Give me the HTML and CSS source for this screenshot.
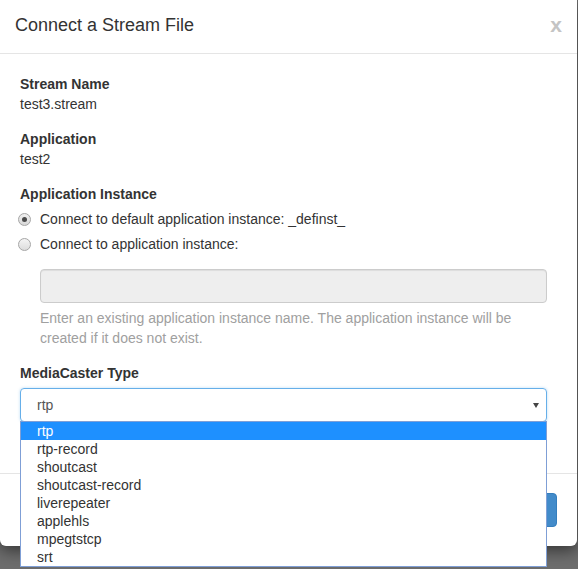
FILE: index.html
```html
<!DOCTYPE html>
<html lang="en">
<head>
<meta charset="utf-8">
<title>Connect a Stream File</title>
<link rel="stylesheet" href="styles.css">
</head>
<body>
<div class="modal">
  <div class="modal-header">
    <h4 class="modal-title">Connect a Stream File</h4>
    <span class="close">x</span>
  </div>
  <div class="modal-body">
    <div class="field">
      <div class="label">Stream Name</div>
      <div class="value">test3.stream</div>
    </div>
    <div class="field">
      <div class="label">Application</div>
      <div class="value">test2</div>
    </div>
    <div class="field instance">
      <div class="label">Application Instance</div>
      <div class="radio-row">
        <span class="radio checked"></span>
        <span>Connect to default application instance: _definst_</span>
      </div>
      <div class="radio-row">
        <span class="radio"></span>
        <span>Connect to application instance:</span>
      </div>
      <div class="indent">
        <div class="input disabled"></div>
        <div class="help">Enter an existing application instance name. The application instance will be created if it does not exist.</div>
      </div>
    </div>
    <div class="field last">
      <div class="label label-form">MediaCaster Type</div>
      <div class="select-wrap">
        <div class="select">
          <span>rtp</span>
          <span class="caret"></span>
        </div>
        <ul class="options">
          <li class="selected">rtp</li>
          <li>rtp-record</li>
          <li>shoutcast</li>
          <li>shoutcast-record</li>
          <li>liverepeater</li>
          <li>applehls</li>
          <li>mpegtstcp</li>
          <li>srt</li>
        </ul>
      </div>
    </div>
  </div>
  <div class="modal-footer">
    <button class="btn-primary">Add</button>
  </div>
</div>
</body>
</html>
```

FILE: styles.css
```css
html, body {
  margin: 0;
  padding: 0;
}

body {
  background: #6d6d6d;
  font-family: "Liberation Sans", Arial, sans-serif;
  font-size: 14px;
  color: #333;
  height: 569px;
  overflow: hidden;
}

.modal {
  width: 577px;
  background: #fff;
  border-radius: 0 0 6px 6px;
  box-shadow: 0 5px 15px rgba(0, 0, 0, 0.5);
}

.modal-header {
  display: flex;
  justify-content: space-between;
  align-items: flex-start;
  padding: 12px 15px 15px 15px;
  border-bottom: 1px solid #e5e5e5;
}

.modal-title {
  margin: 0;
  font-size: 18px;
  font-weight: normal;
  line-height: 26px;
  color: #333;
}

.close {
  font-size: 21px;
  font-weight: bold;
  line-height: 26px;
  color: #c4c4c4;
}

.modal-body {
  padding: 21px 30px 51px 20px;
}

.field {
  margin-bottom: 16px;
}

.field.instance {
  margin-bottom: 15px;
}

.field.last {
  margin-bottom: 0;
}

.label {
  font-weight: bold;
  line-height: 19px;
}

.label-form {
  line-height: 20px;
  margin-bottom: 5px;
}

.value {
  line-height: 20px;
}

.radio-row {
  display: flex;
  align-items: center;
  line-height: 20px;
  margin-top: 5px;
}

.radio {
  box-sizing: border-box;
  width: 13px;
  height: 13px;
  margin-left: -2px;
  margin-right: 9px;
  border-radius: 50%;
  border: 1px solid #a6a6a6;
  background: linear-gradient(#f4f4f4, #dcdcdc);
  display: flex;
  align-items: center;
  justify-content: center;
}

.radio.checked {
  background: linear-gradient(#f0f0f0, #d8d8d8);
}

.radio.checked::after {
  content: "";
  width: 5px;
  height: 5px;
  border-radius: 50%;
  background: #4a4a4a;
}

.indent {
  padding-left: 20px;
  margin-top: 15px;
}

.input {
  box-sizing: border-box;
  height: 34px;
  border: 1px solid #ccc;
  border-radius: 4px;
  box-shadow: inset 0 1px 1px rgba(0, 0, 0, 0.075);
}

.input.disabled {
  background: #eee;
}

.help {
  margin-top: 5px;
  line-height: 20px;
  color: #a0a0a0;
}

.select-wrap {
  position: relative;
}

.select {
  box-sizing: border-box;
  height: 34px;
  display: flex;
  align-items: center;
  justify-content: space-between;
  padding: 0 7px 0 16px;
  border: 1px solid #66afe9;
  border-radius: 4px;
  box-shadow: 0 0 3px rgba(102, 175, 233, 0.45);
  color: #555;
}

.caret {
  width: 0;
  height: 0;
  border-left: 3px solid transparent;
  border-right: 3px solid transparent;
  border-top: 5px solid #444;
}

.options {
  position: absolute;
  left: 0;
  right: 0;
  top: calc(100% - 1px);
  margin: 0;
  padding: 0;
  list-style: none;
  background: #fff;
  border: 1px solid #7f9fd6;
  z-index: 2;
}

.options li {
  height: 18px;
  line-height: 18px;
  padding-left: 16px;
  color: #333;
}

.options li.selected {
  background: #1e90ff;
  color: #fff;
}

.modal-footer {
  display: flex;
  justify-content: flex-end;
  padding: 19px 20px 19px 20px;
  border-top: 1px solid #e5e5e5;
}

.btn-primary {
  height: 34px;
  padding: 0 14px;
  font-family: inherit;
  font-size: 14px;
  color: #fff;
  background: #428bca;
  border: 1px solid #357ebd;
  border-radius: 4px;
}
```
